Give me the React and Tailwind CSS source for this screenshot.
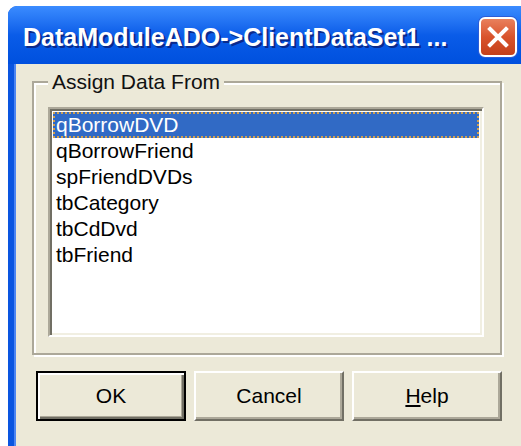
const items = [
  "qBorrowDVD",
  "qBorrowFriend",
  "spFriendDVDs",
  "tbCategory",
  "tbCdDvd",
  "tbFriend",
];

function CloseButton() {
  return (
    <div className="w-[38px] h-[40px] rounded-[6px] border-2 border-white bg-gradient-to-b from-[#e9805c] via-[#d9532c] to-[#c4401a] flex items-center justify-center shadow-[0_0_0_1px_#2c5cd6]">
      <svg width="22" height="22" viewBox="0 0 22 22">
        <path d="M3 3 L19 19 M19 3 L3 19" stroke="#fff" strokeWidth="4" strokeLinecap="square" />
      </svg>
    </div>
  );
}

function PushButton({ children, isDefault }) {
  const look = isDefault
    ? "border-2 border-black shadow-[inset_2px_2px_0_#fff,inset_-2px_-2px_0_#716f64,inset_-3px_-3px_0_#aca899]"
    : "border-2 border-t-white border-l-white border-b-[#716f64] border-r-[#716f64] shadow-[inset_-2px_-2px_0_#aca899]";
  return (
    <button className={`w-[150px] h-[50px] bg-[#ece9d8] text-[21px] text-black flex items-center justify-center ${look}`}>
      {children}
    </button>
  );
}

export default function App() {
  return (
    <div className="w-[521px] h-[446px] bg-white overflow-hidden pt-[6px] pl-[8px] font-['Liberation_Sans',Arial,sans-serif]">
      <div className="w-[540px] h-[470px] rounded-t-[9px] bg-[#0a55e0] flex flex-col">
        {/* title bar */}
        <div className="h-[58px] rounded-t-[9px] bg-gradient-to-b from-[#3b8cff] via-[#0a5ce8] to-[#0050de] flex items-center pt-[4px] pl-[15px] pr-[31px]">
          <span className="flex-1 text-white font-bold text-[25px] leading-none [text-shadow:2px_2px_0_#0a2a8c] whitespace-nowrap">
            DataModuleADO-&gt;ClientDataSet1 ...
          </span>
          <CloseButton />
        </div>

        {/* client area */}
        <div className="flex-1 ml-[6px] bg-[#ece9d8] border-l-2 border-l-[#4d86f2] pl-[16px] pt-[17px]">
          <div className="relative w-[470px] h-[274px] border-2 border-[#aca899] shadow-[inset_2px_2px_0_#fff,2px_2px_0_#fff] pl-[14px] pt-[24px]">
            <span className="absolute -top-[14px] left-[14px] px-[4px] bg-[#ece9d8] text-[21px] leading-[26px] text-[#111]">
              Assign Data From
            </span>

            <div className="w-[436px] h-[230px] bg-white border-2 border-t-[#aca899] border-l-[#aca899] border-b-white border-r-white shadow-[inset_2px_2px_0_#716f64,inset_-2px_-2px_0_#f1efe2] p-[3px] pt-[3px]">
              {items.map((name, i) => (
                <div
                  key={name}
                  className={`h-[26px] pl-[3px] text-[21px] leading-[26px] ${
                    i === 0
                      ? "bg-[#316ac5] text-white outline-2 outline-dotted outline-[#d0a050] -outline-offset-2"
                      : "text-black"
                  }`}
                >
                  {name}
                </div>
              ))}
            </div>
          </div>

          <div className="flex gap-[8px] mt-[16px] ml-[4px]">
            <PushButton isDefault>OK</PushButton>
            <PushButton>Cancel</PushButton>
            <PushButton>
              <span className="underline underline-offset-2">H</span>elp
            </PushButton>
          </div>
        </div>
      </div>
    </div>
  );
}
